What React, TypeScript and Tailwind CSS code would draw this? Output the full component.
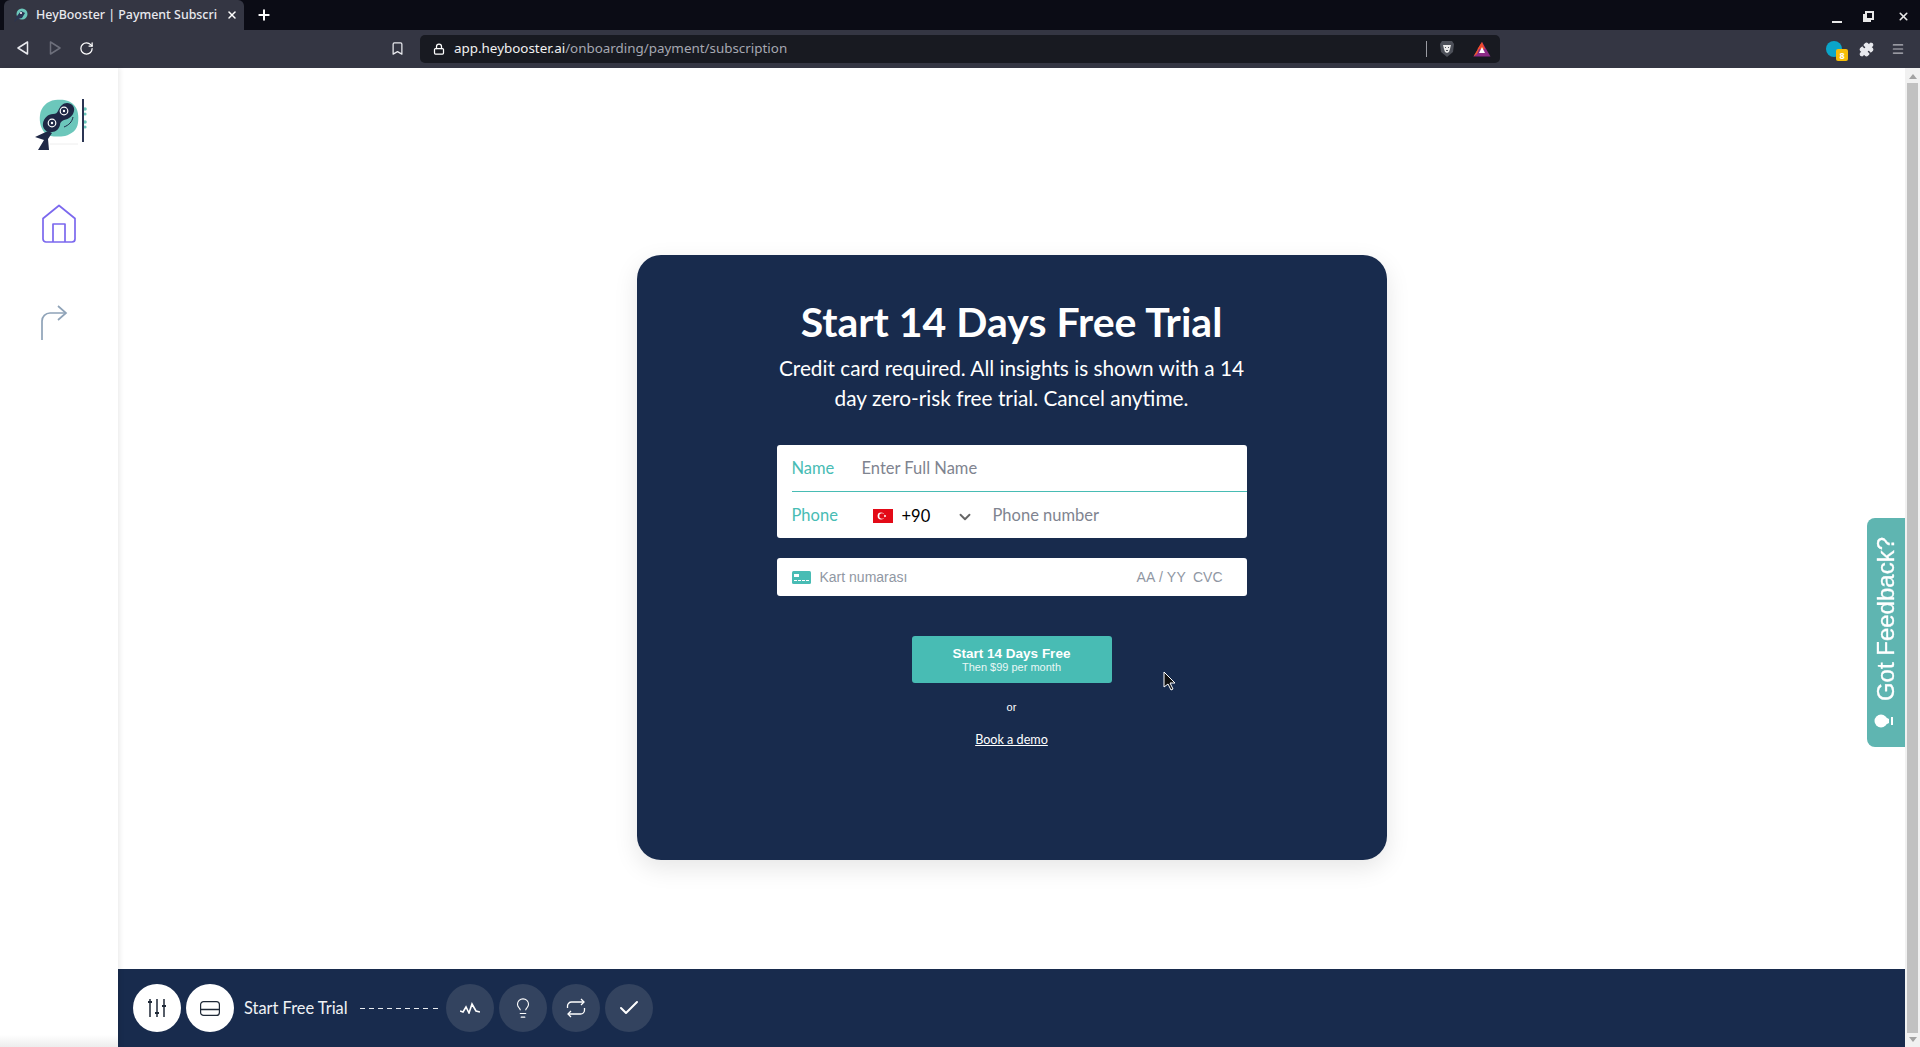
import { Bookmark, Check, ChevronDown, Lightbulb, Lock, Menu, Plus, Puzzle, RotateCw, X } from "lucide-react";

const avenir = "font-['Lato','Noto_Sans',sans-serif]";

function Logo() {
  return (
    <svg width="60" height="60" viewBox="10 10 60 60" className="blur-[0.3px]">
      <path d="M20 30c1-8 7-14 15-15 8-1 15 0 19 5 4 4 5 11 4 18-1 7-6 11-13 13-7 1-15 1-19-2-5-4-7-12-6-19z" fill="#6cc7bb" />
      <path d="M30 59h28" stroke="#eee" strokeWidth="1" />
      <circle cx="65" cy="24" r="1.8" fill="#6cc7bb" />
      <circle cx="65" cy="29" r="1.6" fill="#6cc7bb" />
      <circle cx="65" cy="37" r="1.8" fill="#6cc7bb" />
      <circle cx="65" cy="42" r="1.6" fill="#6cc7bb" />
      <rect x="62" y="14" width="2" height="43" fill="#2b3553" />
      <path d="M53 32c-1 5-4 8-9 10" fill="none" stroke="#1f2846" strokeWidth="1" />
      <path d="M33 29c3 0 4-1 5-3 2-5 5-8 9-8 5 0 8 4 7 8-1 5-5 8-10 9-3 1-4 3-4 5-1 4-4 7-8 7-5 1-10-3-9-9 1-5 5-9 10-9z" fill="#1f2846" />
      <path d="M28 46L15 52l9 3-6 10 11 0-1-11 4-6z" fill="#1f2846" />
      <circle cx="44" cy="26" r="3.8" fill="#1f2846" stroke="#fff" strokeWidth="1.2" />
      <circle cx="44" cy="26" r="1.2" fill="#fff" />
      <circle cx="32" cy="38" r="3.8" fill="#1f2846" stroke="#fff" strokeWidth="1.2" />
      <circle cx="32" cy="38" r="1.2" fill="#fff" />
    </svg>
  );
}

function Sidebar() {
  return (
    <aside className="relative z-10 flex w-[118px] shrink-0 flex-col bg-white pl-[30px] pt-[27px] shadow-[2px_0_5px_rgba(0,0,0,0.08)]">
      <Logo />
      <svg width="36" height="40" viewBox="0 0 36 40" fill="none" stroke="#7b68ee" strokeWidth="1.7" strokeLinejoin="round" className="ml-[11px] mt-[49px]">
        <path d="M18 1.5L34 14.5V35a3 3 0 0 1-3 3H5a3 3 0 0 1-3-3V14.5z" />
        <path d="M12 38V20h12v18" />
      </svg>
      <svg width="28" height="36" viewBox="0 0 28 36" fill="none" stroke="#8fa3b8" strokeWidth="1.7" className="ml-[10px] mt-[61px]">
        <path d="M2 35V16a8 8 0 0 1 8-8h16" />
        <path d="M18 1l8 7-8 7" />
      </svg>
      <div className="absolute bottom-0 left-0 h-3 w-full bg-gradient-to-b from-white to-[#ededed]" />
    </aside>
  );
}

function TopBar() {
  return (
    <header className="shrink-0 font-['Noto_Sans',sans-serif]">
      <div className="flex h-[30px] items-end bg-[#0b0c15] pl-1">
        <div className="flex h-[30px] w-[240px] items-center rounded-t-md bg-[#343643] pl-[9px] pr-[6px]">
          <svg width="15" height="15" viewBox="0 0 15 15" className="shrink-0">
            <circle cx="9" cy="6" r="5.5" fill="#6cc7bb" />
            <path d="M1 14l3-6 4-5 4 2-3 5-4 1z" fill="#2b3553" />
            <circle cx="8" cy="5" r="1" fill="#fff" />
          </svg>
          <span className="ml-2 flex-1 whitespace-nowrap text-[12.4px] font-medium text-[#e8e9ee]">HeyBooster | Payment Subscri</span>
          <X size={12} strokeWidth={3} className="ml-1 shrink-0 text-white" />
        </div>
        <Plus size={16} strokeWidth={3} className="mb-[7px] ml-3 text-white" />
        <div className="mb-[7px] ml-auto flex items-center gap-[22px] pr-[10px] text-[#e8e8e8]">
          <div className="h-[2px] w-[10px] self-end bg-[#e8e8e8]" />
          <svg width="11" height="11" viewBox="0 0 11 11" fill="none" stroke="#e8e8e8" strokeWidth="2" className="-translate-x-[1px]"><path d="M3 1h7v7H3zM1 3v7h7" /></svg>
          <X size={13} strokeWidth={3} />
        </div>
      </div>
      <div className="flex h-[38px] items-center bg-[#343643] text-white">
        <div className="flex -translate-y-px items-center pl-[17px]">
          <svg width="12" height="14" viewBox="0 0 12 14" fill="none" stroke="#e8e9ee" strokeWidth="1.5" strokeLinejoin="round"><path d="M10.5 1v12L1 7z" /></svg>
          <svg width="12" height="14" viewBox="0 0 12 14" fill="none" stroke="#6d6f7b" strokeWidth="1.5" strokeLinejoin="round" className="ml-[20px]"><path d="M1.5 1v12L11 7z" /></svg>
          <RotateCw size={15} strokeWidth={2} className="ml-[18px]" />
        </div>
        <Bookmark size={15} strokeWidth={2} className="ml-[296px] -translate-y-px text-[#e8e9ee]" />
        <div className="ml-[15px] flex h-[28px] w-[1080px] items-center rounded-[5px] bg-[#181a21] pl-[13px] pr-[9px]">
          <Lock size={12} strokeWidth={2.5} />
          <span className="ml-[9px] flex-1 -translate-y-px text-[13.4px] text-[#f1f1f1]">
            app.heybooster.ai<span className="text-[#a6a8b2]">/onboarding/payment/subscription</span>
          </span>
          <div className="mr-3 h-[16px] w-px bg-[#9a9ba2]" />
          <svg width="16" height="18" viewBox="0 0 16 18">
            <path d="M3 1h10l2 3-1 8-6 5-6-5-1-8z" fill="#4d5059" />
            <path d="M4 5h8l-1 4-1 3-2 1-2-1-1-3z" fill="#e9e9e9" />
            <path d="M6 7h1v1H6zM9 7h1v1H9zM7 10h2v1H7z" fill="#4d5059" />
          </svg>
          <svg width="18" height="16" viewBox="0 0 18 16" className="ml-[18px]">
            <path d="M9 1L0.5 15.5h17z" fill="#8d2b87" />
            <path d="M9 1L0.5 15.5 4 13z" fill="#f15a29" />
            <path d="M9 1l3 7H4.5z" fill="#ef4b2b" />
            <path d="M9 6l-3 6h6z" fill="#fff" />
          </svg>
        </div>
        <div className="relative ml-[326px] size-4 rounded-full bg-[#0aa5c9]">
          <span className="absolute left-[10px] top-[8px] flex size-3 items-center justify-center rounded-[2px] bg-[#f5bd07] text-[9px] font-bold leading-none text-white">8</span>
        </div>
        <Puzzle size={15} fill="#e8e9ee" className="ml-[17px] text-[#e8e9ee]" />
        <Menu size={14} strokeWidth={2} className="ml-[17px] text-[#b9bac1]" />
      </div>
    </header>
  );
}

function PaymentCard() {
  return (
    <section className={`flex h-[605px] w-[750px] flex-col items-center rounded-[24px] bg-[#182b4d] pt-[40px] text-white shadow-[0_8px_24px_rgba(0,0,0,0.1)] ${avenir}`}>
      <h1 className="text-[41px] font-bold leading-[54px]">Start 14 Days Free Trial</h1>
      <p className="mt-[4px] w-[490px] text-center text-[20.8px] leading-[30px]">
        Credit card required. All insights is shown with a 14 day zero-risk free trial. Cancel anytime.
      </p>
      <form className="mt-[32px] w-[470px]">
        <div className="rounded-[3px] bg-white pl-[15px] text-[16.5px]">
          <label className="flex h-[47px] items-center border-b border-[#48bcb4]">
            <span className="w-[70px] text-[#48bcb4]">Name</span>
            <input placeholder="Enter Full Name" className="flex-1 bg-transparent outline-none placeholder:text-[#7f8490]" />
          </label>
          <div className="flex h-[46px] items-center">
            <span className="w-[81px] text-[#48bcb4]">Phone</span>
            <svg width="20" height="14" viewBox="0 0 20 14" className="translate-y-px">
              <rect width="20" height="14" fill="#e30a17" />
              <circle cx="8" cy="7" r="3.4" fill="#fff" />
              <circle cx="9" cy="7" r="2.7" fill="#e30a17" />
              <circle cx="12" cy="7" r="1" fill="#fff" />
            </svg>
            <span className="ml-[9px] w-[54px] translate-y-px text-black">+90</span>
            <ChevronDown size={18} strokeWidth={2.5} className="translate-y-[2px] text-[#666]" />
            <input placeholder="Phone number" className="ml-[19px] min-w-0 flex-1 bg-transparent outline-none placeholder:text-[#7f8490]" />
          </div>
        </div>
        <div className="mt-5 flex h-[38px] items-center rounded-[3px] bg-white pl-[15px] pr-[24px] font-['Liberation_Sans',sans-serif] text-[14px] text-[#9097a3]">
          <svg width="19" height="13" viewBox="0 0 19 13" className="shrink-0">
            <rect width="19" height="13" rx="1.5" fill="#48bcb4" />
            <rect x="2" y="3" width="5" height="3" fill="#fff" />
            <path d="M2 9.5h15" stroke="#fff" strokeDasharray="3 1" />
          </svg>
          <input placeholder="Kart numarası" className="ml-[9px] min-w-0 flex-1 bg-transparent outline-none placeholder:text-[#9097a3]" />
          <span className="tracking-[0.2px]">AA / YY</span>
          <span className="ml-[7px]">CVC</span>
        </div>
      </form>
      <button type="button" className="mt-10 flex h-[47px] w-[200px] flex-col items-center justify-center rounded-[3px] bg-[#48bcb4] font-['Liberation_Sans',sans-serif] leading-none text-white">
        <span className="text-[13.5px] font-bold leading-[14px]">Start 14 Days Free</span>
        <span className="text-[11px] leading-[12px] text-[#e8f7f5]">Then $99 per month</span>
      </button>
      <span className="mt-[16px] font-['Liberation_Sans',sans-serif] text-[11px] leading-[16px]">or</span>
      <a href="#" className="mt-[17px] text-[12.6px] leading-[16px] underline">Book a demo</a>
    </section>
  );
}

function StepButton({ active, children }: { active?: boolean; children: React.ReactNode }) {
  return (
    <div className={`flex size-12 items-center justify-center rounded-full ${active ? "bg-white text-[#1f2937]" : "bg-[#33435f] text-white"}`}>
      {children}
    </div>
  );
}

function BottomBar() {
  return (
    <footer className="flex h-[78px] shrink-0 items-center bg-[#182b4d] pl-[15px]">
      <div className="flex gap-[5px]">
        <StepButton active>
          <svg width="20" height="20" viewBox="0 0 20 20" fill="none" stroke="currentColor" strokeWidth="1.5">
            <path d="M3 1v18M10 1v18M17 1v18" />
            <path d="M1 4h4M8 15h4M15 8h4" strokeWidth="2" />
          </svg>
        </StepButton>
        <StepButton active>
          <svg width="20" height="15" viewBox="0 0 20 15" fill="none" stroke="currentColor" strokeWidth="1.2">
            <rect x="0.6" y="0.6" width="18.8" height="13.8" rx="3" />
            <path d="M1 8.5h18" strokeWidth="1.5" />
          </svg>
        </StepButton>
      </div>
      <span className={`ml-[10px] text-[16.4px] text-[#f0f2f5] ${avenir}`}>Start Free Trial</span>
      <div className="ml-[12px] mr-[8px] flex w-[78px] justify-between">
        {[...Array(9)].map((_, i) => (
          <span key={i} className="h-px w-[5px] bg-[#e8ecf1]" />
        ))}
      </div>
      <div className="flex gap-[5px]">
        <StepButton>
          <svg width="20" height="12" viewBox="0 0 20 12" fill="none" stroke="currentColor" strokeWidth="1.6"><path d="M0 9l3 1 3-5 3 6 3-9 4 7 4 1" /></svg>
        </StepButton>
        <StepButton><Lightbulb size={22} strokeWidth={1.2} /></StepButton>
        <StepButton>
          <svg width="20" height="20" viewBox="0 0 20 20" fill="none" stroke="currentColor" strokeWidth="1.3">
            <path d="M1.5 10V8a4 4 0 0 1 4-4H18" />
            <path d="M15 1l3 3-3 3" />
            <path d="M18.5 10v2a4 4 0 0 1-4 4H2" />
            <path d="M5 19l-3-3 3-3" />
          </svg>
        </StepButton>
        <StepButton><Check size={24} strokeWidth={2} /></StepButton>
      </div>
    </footer>
  );
}

function Feedback() {
  return (
    <div className="absolute right-0 top-[450px] flex h-[229px] w-[38px] flex-col items-center rounded-l-[8px] bg-[#5fb5b1] pt-[19px] font-['Liberation_Sans',sans-serif] text-white">
      <span className="rotate-180 text-[24px] leading-[38px] [-webkit-text-stroke:0.3px_white] [writing-mode:vertical-rl]">Got Feedback?</span>
      <svg width="22" height="14" viewBox="0 0 22 14" className="mt-[13px] -translate-x-[1px]">
        <circle cx="7" cy="7" r="6.5" fill="#fff" />
        <path d="M11 3l4 2v4l-4 2z" fill="#fff" />
        <path d="M18 3v8" stroke="#fff" strokeWidth="2" />
      </svg>
    </div>
  );
}

function Scrollbar() {
  return (
    <div className="flex w-[15px] shrink-0 flex-col items-center bg-[#f1f1f1]">
      <div className="mt-[6px] size-0 border-x-[4px] border-b-[5px] border-x-transparent border-b-[#a3a3a3]" />
      <div className="mt-[4px] w-[11px] flex-1 bg-[#c1c1c1]" />
      <div className="mb-[5px] mt-[4px] size-0 border-x-[4px] border-t-[5px] border-x-transparent border-t-[#a3a3a3]" />
    </div>
  );
}

export default function App() {
  return (
    <div className="flex h-[1047px] w-[1920px] flex-col overflow-hidden bg-white">
      <TopBar />
      <div className="flex min-h-0 flex-1">
        <Sidebar />
        <main className="relative flex min-w-0 flex-1 flex-col">
          <div className="flex flex-1 justify-center pt-[187px]">
            <PaymentCard />
          </div>
          <BottomBar />
          <Feedback />
          <svg width="13" height="20" viewBox="0 0 13 20" className="absolute left-[1045px] top-[603px]">
            <path d="M1 1v15l4-3 3 6 2-1-3-6h5z" fill="#111" stroke="#fff" strokeWidth="1" />
          </svg>
        </main>
        <Scrollbar />
      </div>
    </div>
  );
}
